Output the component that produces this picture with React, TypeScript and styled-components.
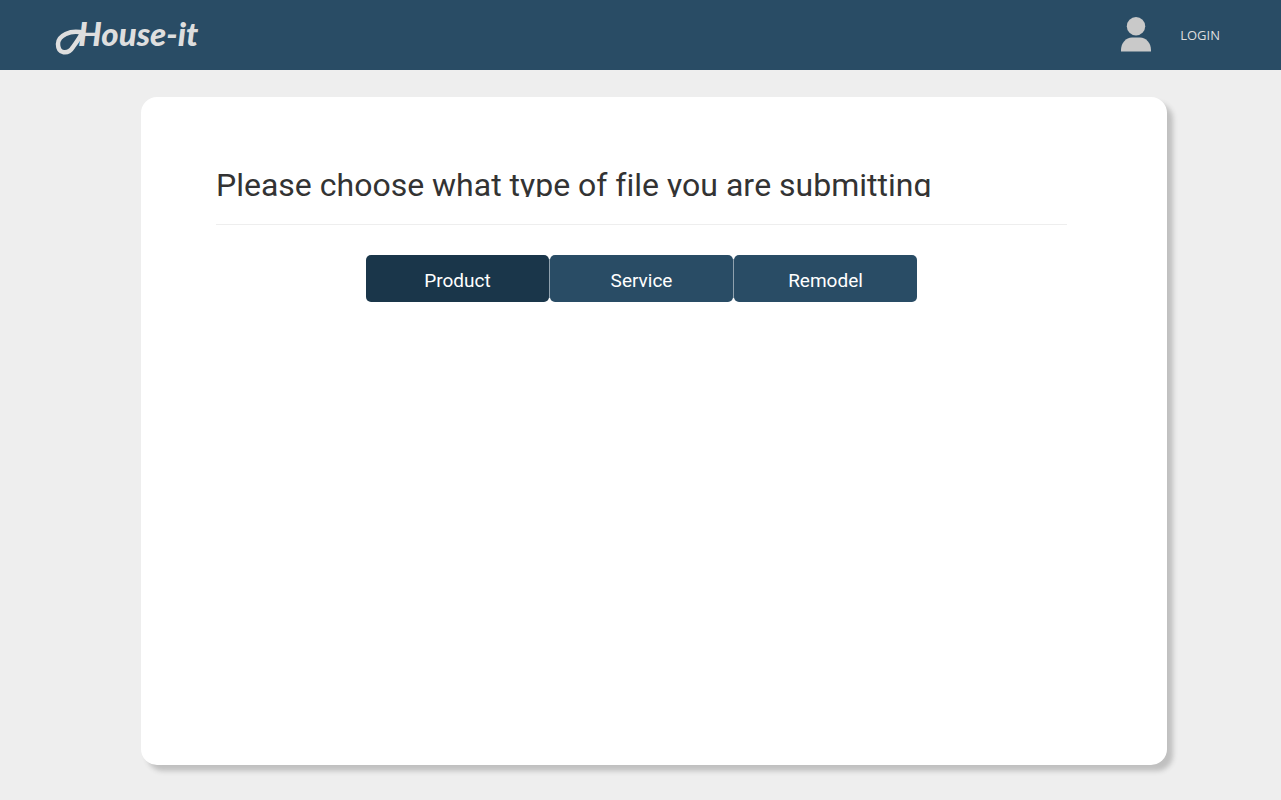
import React, { useState } from "react";
import styled, { createGlobalStyle } from "styled-components";

const GlobalStyle = createGlobalStyle`
  * { box-sizing: border-box; }
  body {
    margin: 0;
    background: #eeeeee;
    color: #333333;
    font-family: Roboto, "Liberation Sans", sans-serif;
  }
`;

const Header = styled.header`
  display: flex;
  align-items: center;
  justify-content: space-between;
  height: 70px;
  padding: 0 61px 0 55px;
  background: #294c65;
`;

const Brand = styled.a`
  display: flex;
  align-items: center;
  color: #dedede;
  text-decoration: none;
`;

const Flourish = styled.svg`
  display: block;
  width: 30px;
  height: 40px;
  margin-right: -7px;
`;

const BrandName = styled.span`
  padding-bottom: 4px;
  font: italic 900 33px/40px Lato, sans-serif;
`;

const Account = styled.nav`
  display: flex;
  align-items: center;
  gap: 29px;
`;

const Avatar = styled.svg`
  display: block;
  width: 30px;
  height: 36px;
`;

const LoginLink = styled.a`
  color: #dedede;
  font: 400 13px/20px "Open Sans", sans-serif;
  text-decoration: none;
`;

const Card = styled.main`
  min-height: calc(100vh - 132px);
  margin: 27px 114px 35px 141px;
  padding: 75px 100px 75px 75px;
  border-radius: 16px;
  background: #ffffff;
  box-shadow: 6px 6px 5px #c0c0c0;
`;

const Title = styled.h1`
  height: 25px;
  margin: 0;
  overflow: hidden;
  font-size: 32px;
  font-weight: 400;
  line-height: 26px;
  font-kerning: none;
  font-variant-ligatures: none;
  white-space: nowrap;
`;

const Divider = styled.hr`
  height: 1px;
  margin: 27px 0 30px;
  border: 0;
  background: #eeeeee;
`;

const Choices = styled.div`
  display: flex;
  justify-content: center;
  gap: 1px;
  width: fit-content;
  margin: 0 auto;
  border-radius: 5px;
  background: linear-gradient(#8fa1ae, #8fa1ae) center / 380px 39px no-repeat;
`;

const Choice = styled.button<{ $active: boolean }>`
  width: 183px;
  height: 47px;
  padding: 4px 0 0;
  border: 0;
  border-radius: 5px;
  background: ${({ $active }) => ($active ? "#1a364a" : "#294c65")};
  color: #ffffff;
  font-family: inherit;
  font-size: 19px;
  cursor: pointer;
`;

const fileTypes = ["Product", "Service", "Remodel"];

export default function App() {
  const [selected, setSelected] = useState("Product");

  return (
    <>
      <GlobalStyle />
      <Header>
        <Brand href="#">
          <Flourish viewBox="0 0 30 40" aria-hidden="true">
            <path
              d="M29 18C15 14 3 21 3 29c0 10 10 11 15 3 3-4 6-8 9-14"
              fill="none"
              stroke="currentColor"
              strokeWidth="4.500"
              strokeLinecap="round"
            />
          </Flourish>
          <BrandName>House-it</BrandName>
        </Brand>
        <Account>
          <Avatar viewBox="0 0 30 36" aria-hidden="true" fill="#c9c9c9">
            <circle cx="15" cy="9.2" r="9.2" />
            <path d="M0 34.600v-1.600C0 26 5 20.500 11 20.500h8c6 0 11 5.500 11 12.500v1.600z" />
          </Avatar>
          <LoginLink href="#login">LOGIN</LoginLink>
        </Account>
      </Header>
      <Card>
        <Title>Please choose what type of file you are submitting</Title>
        <Divider />
        <Choices role="group" aria-label="File type">
          {fileTypes.map((type) => (
            <Choice
              key={type}
              type="button"
              $active={selected === type}
              aria-pressed={selected === type}
              onClick={() => setSelected(type)}
            >
              {type}
            </Choice>
          ))}
        </Choices>
      </Card>
    </>
  );
}
